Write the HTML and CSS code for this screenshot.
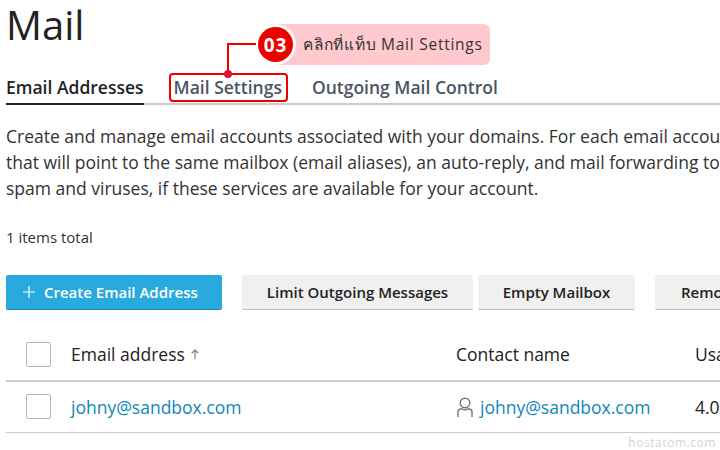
FILE: index.html
```html
<!DOCTYPE html>
<html lang="en">
<head>
    <meta charset="UTF-8">
    <meta name="viewport" content="width=device-width, initial-scale=1.0">
    <title>Mail</title>
    <link rel="stylesheet" href="styles.css">
</head>
<body>
    <h1>Mail</h1>

    <!-- Tabs -->
    <div class="tabs">
        <a class="tab active" href="#">Email Addresses</a>
        <a class="tab marked" href="#">Mail Settings</a>
        <a class="tab last" href="#">Outgoing Mail Control</a>
    </div>

    <p class="intro">
        Create and manage email accounts associated with your domains. For each email account, you can set up<br>
        that will point to the same mailbox (email aliases), an auto-reply, and mail forwarding to other addresses<br>
        spam and viruses, if these services are available for your account.
    </p>

    <div class="total">1 items total</div>

    <!-- Toolbar -->
    <div class="toolbar">
        <a class="btn primary" href="#">
            <svg class="plus" width="12" height="12" viewBox="0 0 12 12" stroke="#ffffff" stroke-width="1.2">
                <path d="M6 0v12M0 6h12"/>
            </svg>
            Create Email Address
        </a>
        <a class="btn limit" href="#">Limit Outgoing Messages</a>
        <a class="btn empty" href="#">Empty Mailbox</a>
        <a class="btn remove" href="#">Remove</a>
    </div>

    <!-- Table -->
    <div class="row head">
        <span class="check"></span>
        <span class="sortable">
            Email address
            <svg width="8" height="10" viewBox="0 0 8 10" fill="none" stroke="#888" stroke-width="1.3">
                <path d="M4 10V1M0.8 4.2L4 1l3.2 3.2"/>
            </svg>
        </span>
        <span>Contact name</span>
        <span>Usage</span>
    </div>
    <div class="row">
        <span class="check"></span>
        <a href="#">johny@sandbox.com</a>
        <span class="contact">
            <svg width="16" height="20" viewBox="0 0 16 20" fill="none" stroke="#777" stroke-width="1.4">
                <circle cx="8" cy="6" r="4.8"/>
                <path d="M1 20v-5q0-3 3-3h1q3 2 6 0h1q3 0 3 3v5"/>
            </svg>
            <a href="#">johny@sandbox.com</a>
        </span>
        <span>4.00 MB</span>
    </div>

    <!-- Callout drawn over the page -->
    <div class="callout">
        <span class="callout-num">03</span>
        <span class="callout-text">คลิกที่แท็บ Mail Settings</span>
    </div>
    <div class="leader"></div>
    <div class="leader-dot"></div>

    <div class="watermark">hostatom.com</div>
</body>
</html>
```

FILE: styles.css
```css
html, body {
    width: 720px;
    height: 450px;
    overflow: hidden;
}

body {
    font-family: 'Open Sans', sans-serif;
    color: #222;
    margin: 0;
    padding: 0 0 0 6px;
    box-sizing: border-box;
    background-color: #ffffff;
    position: relative;
}

a {
    color: #0f88b8;
    text-decoration: none;
}

h1 {
    margin: 0;
    font-size: 40px;
    line-height: 49px;
    font-weight: 400;
    color: #222;
}

/* Tabs */
.tabs {
    display: flex;
    align-items: flex-end;
    gap: 27px;
    height: 56px;
    box-sizing: border-box;
    border-bottom: 2px solid #cccccc;
}

.tab {
    color: #4b5563;
    font-size: 17.5px;
    font-weight: 600;
    line-height: 25px;
    margin-bottom: 3px;
}

.tab.active {
    color: #222;
    margin-bottom: -2px;
    padding-bottom: 3px;
    border-bottom: 2px solid #222;
}

.tab.marked {
    outline: 2px solid #ee0000;
    border-radius: 2px;
    padding: 0 4px 0 3px;
}

.tab.last {
    margin-left: -1px;
}

.intro {
    margin: 18px 0 0;
    font-size: 17.5px;
    line-height: 26px;
    white-space: nowrap;
    color: #333;
}

.total {
    margin-top: 26px;
    font-size: 15px;
    line-height: 20px;
    color: #333;
}

/* Toolbar */
.toolbar {
    display: flex;
    margin-top: 28px;
    height: 35px;
    white-space: nowrap;
}

.btn {
    display: flex;
    align-items: center;
    justify-content: center;
    flex: none;
    box-sizing: border-box;
    height: 35px;
    border-radius: 2px;
    background-color: #f0f0f0;
    border-bottom: 1px solid #bbbbbb;
    color: #222;
    font-size: 15px;
    font-weight: 600;
}

.btn.primary {
    width: 216px;
    padding-left: 17px;
    justify-content: flex-start;
    background-color: #28aade;
    border-bottom-color: #1f8fbd;
    color: #ffffff;
}

.plus {
    margin-right: 9px;
}

.btn.limit {
    width: 231px;
    margin-left: 20px;
}

.btn.empty {
    width: 157px;
    margin-left: 5px;
}

.btn.remove {
    width: 120px;
    margin-left: 20px;
    padding-left: 26px;
    justify-content: flex-start;
}

/* Table */
.row {
    display: grid;
    grid-template-columns: 65px 385px 239px 120px;
    align-items: center;
    height: 51px;
    padding-bottom: 1px;
    box-sizing: border-box;
    border-bottom: 1px solid #cccccc;
    font-size: 17.5px;
    white-space: nowrap;
    width: 714px;
    overflow: hidden;
}

.row.head {
    margin-top: 20px;
    height: 52px;
    padding-bottom: 2px;
    border-bottom: 2px solid #cccccc;
}

.check {
    display: block;
    box-sizing: border-box;
    width: 25px;
    height: 25px;
    margin-left: 20px;
    border: 1px solid #b5b5b5;
    border-radius: 2px;
    background-color: #ffffff;
}

.sortable {
    display: flex;
    align-items: center;
    gap: 6px;
}

.contact {
    display: flex;
    align-items: center;
    gap: 7px;
    padding-left: 1px;
}

/* Callout */
.callout {
    position: absolute;
    left: 258px;
    top: 24px;
    display: flex;
    align-items: center;
    width: 232px;
    height: 41px;
    background: linear-gradient(to right, transparent 18px, #ffc9ce 18px);
    border-radius: 6px;
}

.callout-num {
    display: flex;
    align-items: center;
    justify-content: center;
    flex: none;
    width: 35px;
    height: 35px;
    border-radius: 50%;
    background-color: #ee0000;
    box-shadow: 0 0 0 3px #ffffff;
    color: #ffffff;
    font-size: 19px;
    font-weight: 700;
    letter-spacing: 1px;
}

.callout-text {
    margin-left: 10px;
    font-size: 15.5px;
    letter-spacing: 0.75px;
    color: #333;
    white-space: nowrap;
}

.leader {
    position: absolute;
    left: 227px;
    top: 43px;
    width: 29px;
    height: 31px;
    box-sizing: border-box;
    border-left: 2px solid #ee0000;
    border-top: 2px solid #ee0000;
}

.leader-dot {
    position: absolute;
    left: 224px;
    top: 70px;
    width: 8px;
    height: 8px;
    border-radius: 50%;
    background-color: #dd1133;
}

.watermark {
    position: absolute;
    right: 4px;
    top: 434px;
    font-size: 12px;
    letter-spacing: 0.55px;
    color: #d4d4d4;
}
```
